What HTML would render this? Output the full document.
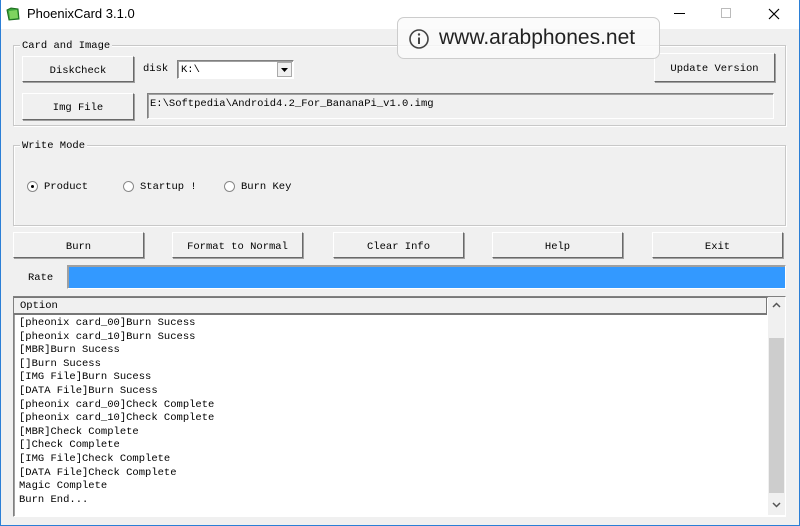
<!DOCTYPE html>
<html><head><meta charset="utf-8"><style>
*{margin:0;padding:0;box-sizing:border-box}
body{width:800px;height:526px;overflow:hidden;background:#f0f0f0;position:relative;font-family:"Liberation Mono","Noto Sans CJK SC",monospace;font-size:10.5px;color:#000}
.abs{position:absolute}
.win{position:absolute;left:0;top:0;width:800px;height:526px;border:1px solid #2b7fd6;border-top:none}
.title{position:absolute;left:0;top:0;width:800px;height:29px;background:#fff}
.grp{position:absolute;border:1px solid #c8c8c8;box-shadow:inset 1px 1px 0 #fff,1px 1px 0 #fff}
.grp span{position:absolute;top:-7px;left:6px;background:#f0f0f0;padding:0 2px;line-height:12px}
.btn{position:absolute;background:#f0f0f0;border:1px solid;border-color:#fff #696969 #696969 #fff;box-shadow:1px 1px 0 #a0a0a0;text-align:center;display:flex;align-items:center;justify-content:center;padding-top:3px}
.field{position:absolute;border:1px solid;border-color:#808080 #fff #fff #808080;box-shadow:inset 1px 1px 0 #a0a0a0}
.radio{position:absolute;width:11px;height:11px;border-radius:50%;border:1px solid #888;background:#fff}
.log div{height:13.6px;line-height:13.6px;white-space:pre}
</style></head><body>
<div class="title">
<svg class="abs" style="left:5px;top:6px" width="16" height="16" viewBox="0 0 16 16"><path d="M2 4 L6 2 L13 3 L14 13 L4 14 Z" fill="#3aa33a" stroke="#1d6e1d"/><path d="M4 5 L12 4 L13 12 L5 13Z" fill="#7fd35f"/></svg>
<div class="abs" style="left:27px;top:6px;font:13px 'Liberation Sans',sans-serif">PhoenixCard 3.1.0</div>
<div class="abs" style="left:674px;top:13px;width:11px;height:1px;background:#000"></div>
<div class="abs" style="left:721px;top:8px;width:10px;height:10px;border:1px solid #bbb"></div>
<svg class="abs" style="left:768px;top:8px" width="12" height="12"><path d="M1 1L11 11M11 1L1 11" stroke="#000" stroke-width="1.2"/></svg>
</div>
<div class="win"></div>

<div class="grp" style="left:13px;top:45px;width:773px;height:81px"><span style="top:-6px">Card and Image</span></div>
<div class="btn" style="left:22px;top:56px;width:112px;height:26px">DiskCheck</div>
<div class="abs" style="left:143px;top:63px">disk</div>
<div class="field" style="left:177px;top:60px;width:117px;height:19px;background:#fff"><span class="abs" style="left:3px;top:3px">K:\</span>
<div class="abs" style="right:1px;top:1px;width:15px;height:15px;background:#f0f0f0;border:1px solid #aaa"><svg width="13" height="13"><path d="M3 5L10 5L6.5 9Z" fill="#000"/></svg></div></div>
<div class="btn" style="left:654px;top:53px;width:121px;height:29px">Update Version</div>
<div class="btn" style="left:22px;top:93px;width:112px;height:27px">Img File</div>
<div class="field" style="left:147px;top:93px;width:627px;height:26px"><span class="abs" style="left:2px;top:4px">E:\Softpedia\Android4.2_For_BananaPi_v1.0.img</span></div>

<div class="grp" style="left:13px;top:145px;width:773px;height:81px"><span style="top:-6px">Write Mode</span></div>
<div class="radio" style="left:27px;top:181px"><div class="abs" style="left:3px;top:3px;width:3px;height:3px;border-radius:50%;background:#000"></div></div>
<div class="abs" style="left:44px;top:181px">Product</div>
<div class="radio" style="left:123px;top:181px"></div>
<div class="abs" style="left:140px;top:181px">Startup !</div>
<div class="radio" style="left:224px;top:181px"></div>
<div class="abs" style="left:241px;top:181px">Burn Key</div>

<div class="btn" style="left:13px;top:232px;width:131px;height:26px">Burn</div>
<div class="btn" style="left:172px;top:232px;width:131px;height:26px">Format to Normal</div>
<div class="btn" style="left:333px;top:232px;width:131px;height:26px">Clear Info</div>
<div class="btn" style="left:492px;top:232px;width:131px;height:26px">Help</div>
<div class="btn" style="left:652px;top:232px;width:131px;height:26px">Exit</div>

<div class="abs" style="left:28px;top:272px">Rate</div>
<div class="field" style="left:67px;top:265px;width:719px;height:24px;background:#3399ff;border-color:#a0a0a0 #fff #fff #a0a0a0"></div>

<div class="field" style="left:13px;top:296px;width:773px;height:221px;background:#fff">
<div class="abs" style="left:0;top:0;width:753px;height:18px;background:#f0f0f0;border-bottom:2px solid #777;border-right:1px solid #777;border-top:1px solid #777"><span class="abs" style="left:6px;top:2px">Option</span></div>
<div class="abs" style="left:754px;top:0;width:17px;height:218px;background:#f0f0f0">
<svg class="abs" style="left:3px;top:4px" width="11" height="8"><path d="M2 6L5.5 2.5L9 6" stroke="#555" stroke-width="1.5" fill="none"/></svg>
<div class="abs" style="left:1px;top:41px;width:15px;height:155px;background:#cdcdcd"></div>
<svg class="abs" style="left:3px;top:204px" width="11" height="8"><path d="M2 2L5.5 5.5L9 2" stroke="#555" stroke-width="1.5" fill="none"/></svg>
</div>
<div class="log abs" style="left:5px;top:20px">
<div>[pheonix card_00]Burn Sucess</div>
<div>[pheonix card_10]Burn Sucess</div>
<div>[MBR]Burn Sucess</div>
<div>[]Burn Sucess</div>
<div>[IMG File]Burn Sucess</div>
<div>[DATA File]Burn Sucess</div>
<div>[pheonix card_00]Check Complete</div>
<div>[pheonix card_10]Check Complete</div>
<div>[MBR]Check Complete</div>
<div>[]Check Complete</div>
<div>[IMG File]Check Complete</div>
<div>[DATA File]Check Complete</div>
<div>Magic Complete</div>
<div>Burn End...</div>
</div>
</div>

<div class="abs" style="left:397px;top:17px;width:263px;height:42px;border-radius:7px;background:rgba(250,250,250,0.85);border:1px solid #ccc">
<svg class="abs" style="left:10px;top:10px" width="22" height="22"><circle cx="11" cy="11" r="9" stroke="#444" stroke-width="1.6" fill="none"/><path d="M11 9.5V16" stroke="#444" stroke-width="2"/><circle cx="11" cy="6.5" r="1.2" fill="#444"/></svg>
<div class="abs" style="left:41px;top:8px;font:21px 'Liberation Sans',sans-serif;color:#222">www.arabphones.net</div>
</div>
</body></html>
